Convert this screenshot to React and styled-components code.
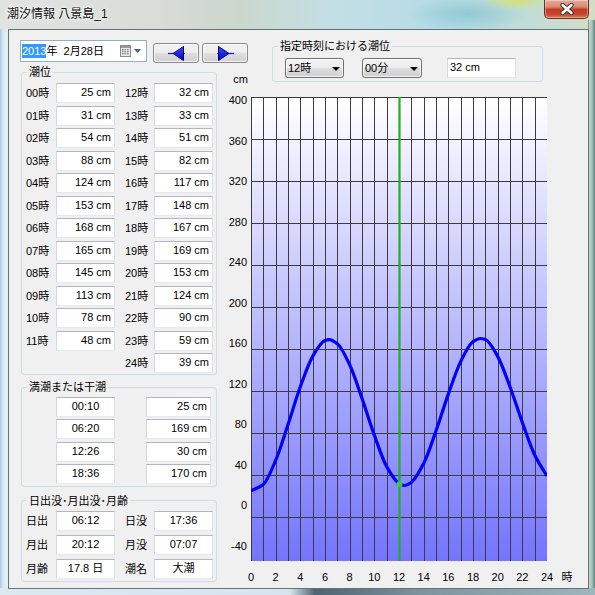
import React from 'react';
import styled, { createGlobalStyle } from 'styled-components';

const FONT = `"Liberation Sans", "Noto Sans CJK JP", sans-serif`;

const Global = createGlobalStyle`
  html, body { margin: 0; padding: 0; background: #fff; }
  body { font-family: ${FONT}; font-size: 11px; color: #000; }
  * { box-sizing: border-box; }
`;

const Window = styled.div`
  width: 595px;
  height: 595px;
  display: flex;
  flex-direction: column;
  overflow: hidden;
  background:
    linear-gradient(90deg, #dde9f1 0px, #d6e4ee 290px, #4f6472 315px, #7d939e 420px, #9fb6bc 100%) left 0 bottom 0 / 100% 7px no-repeat,
    linear-gradient(90deg, #a9c8de 0px, #d8e8f2 3px, #e4eef3 8px) left 0 top 29px / 8px 100% no-repeat,
    linear-gradient(90deg, #4c5a5c 0px, #c4d6cf 1px, #a8c0b6 4px, #6f8f8c 6px) right 0 top 20px / 7px 100% no-repeat,
    radial-gradient(ellipse 36px 12px at 516px 0px, rgba(214, 226, 110, 0.9), rgba(214, 226, 110, 0) 100%),
    radial-gradient(ellipse 60px 18px at 468px 14px, rgba(140, 200, 212, 0.9), rgba(140, 200, 212, 0) 100%),
    linear-gradient(90deg, #e0e3e0 0%, #dadcd8 25%, #cbd7cd 40%, #c3dfe5 56%, #b6dbe4 74%, #c2ddd8 90%, #d2ddc4 100%);
`;

const TitleBar = styled.div`
  height: 29px;
  flex: none;
  display: flex;
  align-items: flex-start;
`;

const Title = styled.div`
  padding-left: 7px;
  line-height: 29px;
  font-size: 12px;
  font-family: "Liberation Sans", "Noto Sans CJK JP", sans-serif;
  color: #111;
  text-shadow: 0 0 6px #fff, 0 0 3px #fff;
`;

const CloseButton = styled.div`
  margin-left: auto;
  margin-right: 6px;
  width: 45px;
  height: 19px;
  border: 1px solid #6a2d22;
  border-top: none;
  border-radius: 0 0 5px 5px;
  background: linear-gradient(#e6aa9a 0%, #d98a76 38%, #c33d26 52%, #c5442b 78%, #df7656 100%);
  box-shadow: inset 0 0 0 1px rgba(255, 255, 255, 0.35);
  display: flex;
  align-items: center;
  justify-content: center;
`;

const ClientRow = styled.div`
  flex: 1;
  display: flex;
  padding: 0 6px 6px 8px;
`;

const Client = styled.div`
  flex: 1;
  border: 1px solid #66727b;
  background: #f0f0f0;
  padding: 9px 0 0 11px;
  display: flex;
  align-items: flex-start;
`;

const LeftPane = styled.div`
  width: 209px;
  flex: none;
  display: flex;
  flex-direction: column;
`;

const NavRow = styled.div`
  display: flex;
  align-items: flex-start;
  gap: 6px;
  width: max-content;
  margin-top: 1px;
  height: 22px;
`;

const DatePicker = styled.div`
  width: 127px;
  height: 22px;
  border: 1px solid #93aecb;
  background: #fff;
  display: flex;
  align-items: center;
  padding: 0 5px 0 1px;
`;

const Selected = styled.span`
  background: #3399ff;
  color: #fff;
  line-height: 14px;
`;

const DateText = styled.span`
  white-space: pre;
  line-height: 14px;
`;

const PickerIcons = styled.div`
  margin-left: auto;
  display: flex;
  align-items: center;
  gap: 3px;
`;

const NavGroup = styled.div`
  display: flex;
  gap: 3px;
  margin-top: 3px;
`;

const VistaButton = styled.div`
  width: ${p => p.$w || 46}px;
  height: 20px;
  border: 1px solid #8a8a8a;
  border-radius: 3px;
  background: linear-gradient(#f4f4f4 0%, #ececec 48%, #dedede 52%, #d0d0d0 100%);
  box-shadow: inset 0 0 0 1px rgba(255, 255, 255, 0.7);
  display: flex;
  align-items: center;
  justify-content: center;
`;

const Group = styled.fieldset`
  margin: ${p => p.$mt || 0}px 0 0 ${p => p.$ml || 1}px;
  padding: 0;
  width: ${p => p.$w || 196}px;
  border: 1px solid #d0dbe2;
  border-radius: 3px;
  min-width: 0;
`;

const Legend = styled.legend`
  margin-left: 5px;
  padding: 0 2px;
  font-size: 11px;
  line-height: 14px;
  height: 14px;
  color: #000;
`;

const TideGrid = styled.div`
  display: grid;
  grid-template-columns: 30px 59px 39px 59px;
  grid-auto-rows: 20px;
  row-gap: ${p => p.$gap}px;
  padding: ${p => p.$pt}px 3px ${p => p.$pb}px 4px;
`;

const HiLoGrid = styled.div`
  display: grid;
  grid-template-columns: 59px 65px;
  column-gap: 31px;
  grid-auto-rows: 20px;
  row-gap: 2.33px;
  padding: 3px 0 2px 34px;
`;

const RowLabel = styled.div`
  line-height: 20px;
  padding-left: ${p => (p.$indent ? 10 : 0)}px;
  grid-column: ${p => p.$col};
  white-space: nowrap;
`;

const Field = styled.div`
  width: ${p => (p.$w ? `${p.$w}px` : 'auto')};
  height: 20px;
  background: #fff;
  border: 1px solid;
  border-color: #b4b6bb #dde1e7 #e3e9ef #d6d8de;
  padding: 0 3px 0 ${p => (p.$align === 'left' ? 2 : 3)}px;
  line-height: 17px;
  text-align: ${p => p.$align || 'right'};
  white-space: pre;
  grid-column: ${p => p.$col || 'auto'};
`;

const RightPane = styled.div`
  width: 359px;
  flex: none;
  display: grid;
  grid-template-columns: 22px 1fr;
  grid-template-rows: 43px 505px;
`;

const CmLabel = styled.div`
  grid-column: 1;
  grid-row: 1;
  align-self: end;
  text-align: right;
  padding-right: 3px;
  line-height: 14px;
  margin-bottom: -4px;
`;

const SpecRow = styled.div`
  display: flex;
  align-items: flex-start;
  padding: 5px 0 0 12px;
`;

const Combo = styled.div`
  width: ${p => p.$w}px;
  height: 20px;
  margin-right: ${p => p.$mr || 0}px;
  border: 1px solid #707070;
  border-radius: 3px;
  background: linear-gradient(#f4f4f4 0%, #ececec 48%, #dddddd 52%, #cfcfcf 100%);
  box-shadow: inset 0 0 0 1px rgba(255, 255, 255, 0.75);
  display: flex;
  align-items: center;
  justify-content: space-between;
  padding: 0 3px 0 2px;
  line-height: 16px;
`;

const ComboArrow = styled.span`
  width: 0;
  height: 0;
  border-left: 4px solid transparent;
  border-right: 4px solid transparent;
  border-top: 4px solid #000;
  margin-top: 1px;
`;

const Chart = styled.svg`
  grid-column: 1 / 3;
  grid-row: 2;
  display: block;
`;

const values = [25, 31, 54, 88, 124, 153, 168, 165, 145, 113, 78, 48, 32, 33, 51, 82, 117, 148, 167, 169, 153, 124, 90, 59, 39];
const hours = values.map((v, i) => [`${String(i).padStart(2, '0')}時`, `${v} cm`]);

const PX = 251, PY = 97, PW = 296, PH = 464;
const xOf = h => PX + (h * PW) / 24;
const yOf = v => 517 - v * 1.05;

function curvePath() {
  const extra = [[6 + 20 / 60, 169], [12 + 26 / 60, 30], [18 + 36 / 60, 170]];
  const raw = values.map((v, i) => [i, v]).concat(extra).sort((a, b) => a[0] - b[0]);
  const n = raw.length;
  const dx = [], s = [];
  for (let i = 0; i < n - 1; i++) {
    dx[i] = raw[i + 1][0] - raw[i][0];
    s[i] = (raw[i + 1][1] - raw[i][1]) / dx[i];
  }
  const m = new Array(n);
  m[0] = s[0];
  m[n - 1] = s[n - 2];
  for (let i = 1; i < n - 1; i++) {
    if (s[i - 1] * s[i] <= 0) m[i] = 0;
    else {
      const w1 = 2 * dx[i] + dx[i - 1];
      const w2 = dx[i] + 2 * dx[i - 1];
      m[i] = (w1 + w2) / (w1 / s[i - 1] + w2 / s[i]);
    }
  }
  const P = ([h, v]) => `${xOf(h).toFixed(2)},${yOf(v).toFixed(2)}`;
  let d = `M${P(raw[0])}`;
  for (let i = 0; i < n - 1; i++) {
    const h0 = raw[i][0], v0 = raw[i][1], h1 = raw[i + 1][0], v1 = raw[i + 1][1];
    const c1 = [h0 + dx[i] / 3, v0 + (m[i] * dx[i]) / 3];
    const c2 = [h1 - dx[i] / 3, v1 - (m[i + 1] * dx[i]) / 3];
    d += ` C${P(c1)} ${P(c2)} ${P([h1, v1])}`;
  }
  return d;
}

const CloseIcon = () => (
  <svg width="16" height="12" viewBox="0 0 16 12">
    <path d="M3.5 2 L12.5 10 M12.5 2 L3.5 10" stroke="#3b3b3b" strokeWidth="4.4" strokeLinecap="round" />
    <path d="M3.5 2 L12.5 10 M12.5 2 L3.5 10" stroke="#fff" strokeWidth="2.4" strokeLinecap="round" />
  </svg>
);

const CalendarIcon = () => (
  <svg width="11" height="12" viewBox="0 0 11 12">
    <rect x="0.5" y="0.5" width="10" height="11" fill="#e8e8e8" stroke="#8a8a8a" />
    <rect x="1" y="1" width="9" height="2" fill="#9a9a9a" />
    {[4, 6, 8].map(y => [2, 4.5, 7].map(x => (
      <rect key={`${x}-${y}`} x={x} y={y} width="1.6" height="1.4" fill="#8c8c8c" />
    )))}
  </svg>
);

const SmallDown = () => (
  <svg width="7" height="4" viewBox="0 0 7 4">
    <path d="M0 0 H7 L3.5 4 Z" fill="#4d6485" />
  </svg>
);

const ArrowIcon = ({ dir }) => (
  <svg width="17" height="15" viewBox="0 0 17 15">
    <defs>
      <linearGradient id={`ag-${dir}`} x1="0" y1="0" x2="0" y2="1">
        <stop offset="0" stopColor="#3a4cff" />
        <stop offset="1" stopColor="#0000d8" />
      </linearGradient>
    </defs>
    <g transform={dir === 'right' ? 'translate(17,0) scale(-1,1)' : undefined}>
      <path d="M0 7.5 H17" stroke="#0018e0" strokeWidth="1.2" />
      <polygon points="5,7.5 15.5,0.5 15.5,14.5" fill={`url(#ag-${dir})`} stroke="#000058" strokeWidth="1" />
    </g>
  </svg>
);

const TideChart = () => {
  const yLabels = [400, 360, 320, 280, 240, 200, 160, 120, 80, 40, 0, -40];
  const hLines = Array.from({ length: 11 }, (_, k) => PY + 42 * k + 0.5);
  const vLines = Array.from({ length: 24 }, (_, h) => Math.round(xOf(h)) + 0.5);
  const xLabels = Array.from({ length: 13 }, (_, k) => k * 2);
  return (
    <Chart width="359" height="505" viewBox="229 82 359 505">
      <defs>
        <linearGradient id="plotbg" x1="0" y1="0" x2="0" y2="1">
          <stop offset="0" stopColor="#ffffff" />
          <stop offset="1" stopColor="#7474ff" />
        </linearGradient>
        <clipPath id="plotclip">
          <rect x={PX} y={PY} width={PW} height={PH} />
        </clipPath>
      </defs>
      <rect x={PX} y={PY} width={PW} height={PH} fill="url(#plotbg)" />
      <g stroke="#3c3c3c" strokeWidth="1" shapeRendering="crispEdges">
        {hLines.map(y => <line key={`h${y}`} x1={PX} x2={PX + PW} y1={y} y2={y} />)}
        {vLines.map(x => <line key={`v${x}`} x1={x} x2={x} y1={PY} y2={PY + PH} />)}
      </g>
      <line x1={399.5} x2={399.5} y1={PY} y2={PY + PH} stroke="#1fb01f" strokeWidth="2.2" />
      <g clipPath="url(#plotclip)">
        <path d={curvePath()} fill="none" stroke="#0000ff" strokeWidth="3.2" strokeLinejoin="round" />
      </g>
      <circle cx={399.5} cy={yOf(32) + 0.5} r="3" fill="#3cc83c" />
      <g fontFamily={FONT} fontSize="11" fill="#000">
        {yLabels.map(v => (
          <text key={`y${v}`} x="247" y={505 - v * 1.0125 + 4} textAnchor="end">{v}</text>
        ))}
        {xLabels.map(h => (
          <text key={`x${h}`} x={xOf(h)} y="581" textAnchor="middle">{h}</text>
        ))}
        <text x="567" y="581" textAnchor="middle">時</text>
      </g>
    </Chart>
  );
};

const hiLo = [
  ['00:10', '25 cm'],
  ['06:20', '169 cm'],
  ['12:26', '30 cm'],
  ['18:36', '170 cm'],
];

const sun = [
  ['日出', '06:12', '日没', '17:36'],
  ['月出', '20:12', '月没', '07:07'],
  ['月齢', '17.8 日', '潮名', '大潮'],
];

export default function App() {
  return (
    <>
      <Global />
      <Window>
        <TitleBar>
          <Title>潮汐情報 八景島_1</Title>
          <CloseButton><CloseIcon /></CloseButton>
        </TitleBar>
        <ClientRow>
          <Client>
            <LeftPane>
              <NavRow>
                <DatePicker>
                  <Selected>2013</Selected>
                  <DateText>{'年  2月28日'}</DateText>
                  <PickerIcons>
                    <CalendarIcon />
                    <SmallDown />
                  </PickerIcons>
                </DatePicker>
                <NavGroup>
                  <VistaButton><ArrowIcon dir="left" /></VistaButton>
                  <VistaButton><ArrowIcon dir="right" /></VistaButton>
                </NavGroup>
              </NavRow>

              <Group $mt={3}>
                <Legend>潮位</Legend>
                <TideGrid $gap={2.5} $pt={4} $pb={1}>
                  {hours.slice(0, 12).map((row, i) => (
                    <React.Fragment key={row[0]}>
                      <RowLabel $col={1}>{row[0]}</RowLabel>
                      <Field $col={2}>{row[1]}</Field>
                      <RowLabel $col={3} $indent>{hours[i + 12][0]}</RowLabel>
                      <Field $col={4}>{hours[i + 12][1]}</Field>
                    </React.Fragment>
                  ))}
                  <RowLabel $col={3} $indent>{hours[24][0]}</RowLabel>
                  <Field $col={4}>{hours[24][1]}</Field>
                </TideGrid>
              </Group>

              <Group $mt={5}>
                <Legend>満潮または干潮</Legend>
                <HiLoGrid>
                  {hiLo.map(([t, v]) => (
                    <React.Fragment key={t}>
                      <Field $align="center">{t}</Field>
                      <Field>{v}</Field>
                    </React.Fragment>
                  ))}
                </HiLoGrid>
              </Group>

              <Group $mt={7}>
                <Legend>日出没･月出没･月齢</Legend>
                <TideGrid $gap={4} $pt={3} $pb={2}>
                  {sun.map(([a, av, b, bv]) => (
                    <React.Fragment key={a}>
                      <RowLabel $col={1}>{a}</RowLabel>
                      <Field $col={2} $align="center">{av}</Field>
                      <RowLabel $col={3} $indent>{b}</RowLabel>
                      <Field $col={4} $align="center">{bv}</Field>
                    </React.Fragment>
                  ))}
                </TideGrid>
              </Group>
            </LeftPane>

            <RightPane>
              <CmLabel>cm</CmLabel>
              <Group $ml={21} $w={271}>
                <Legend>指定時刻における潮位</Legend>
                <SpecRow>
                  <Combo $w={59} $mr={18}>12時<ComboArrow /></Combo>
                  <Combo $w={60} $mr={25}>00分<ComboArrow /></Combo>
                  <Field $w={69} $align="left">32 cm</Field>
                </SpecRow>
              </Group>
              <TideChart />
            </RightPane>
          </Client>
        </ClientRow>
      </Window>
    </>
  );
}
